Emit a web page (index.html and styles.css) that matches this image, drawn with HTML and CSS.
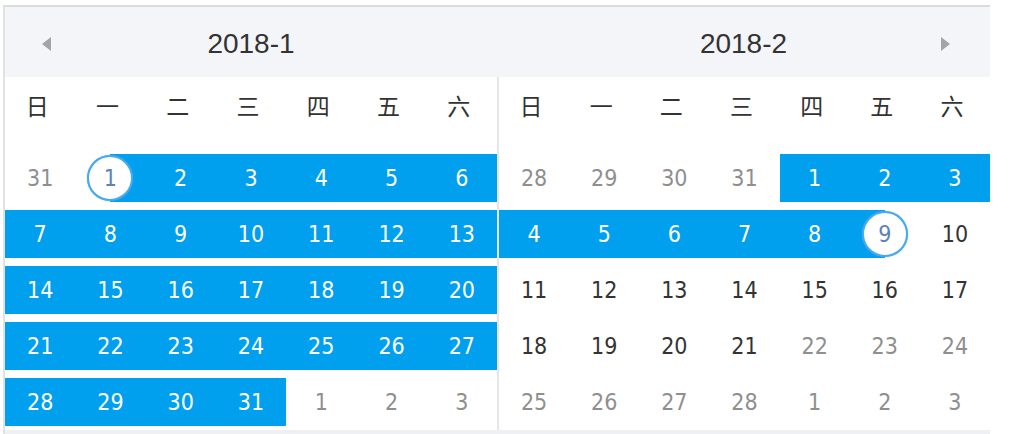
FILE: index.html
```html
<!DOCTYPE html>
<html lang="zh">
<head>
<meta charset="utf-8">
<title>日期范围</title>
<link rel="stylesheet" href="styles.css">
</head>
<body>
<div class="calendar">
  <div class="head">
    <div class="head-half">
      <svg class="arrow arrow-left" width="9" height="14" viewBox="0 0 9 14"><polygon points="9,0 9,14 0,7" fill="#a4a4a4"/></svg>
      <div class="title">2018-1</div>
      <span></span>
    </div>
    <div class="head-half">
      <span></span>
      <div class="title">2018-2</div>
      <svg class="arrow arrow-right" width="9" height="14" viewBox="0 0 9 14"><polygon points="0,0 0,14 9,7" fill="#a4a4a4"/></svg>
    </div>
  </div>
  <div class="body">
    <div class="month">
      <div class="weekdays">
        <div class="wd">日</div><div class="wd">一</div><div class="wd">二</div><div class="wd">三</div><div class="wd">四</div><div class="wd">五</div><div class="wd">六</div>
      </div>
      <div class="days">
        <div class="day"><div class="band muted">31</div></div>
        <div class="day"><div class="band start"><div class="circle">1</div></div></div>
        <div class="day"><div class="band in">2</div></div>
        <div class="day"><div class="band in">3</div></div>
        <div class="day"><div class="band in">4</div></div>
        <div class="day"><div class="band in">5</div></div>
        <div class="day"><div class="band in">6</div></div>

        <div class="day"><div class="band in">7</div></div>
        <div class="day"><div class="band in">8</div></div>
        <div class="day"><div class="band in">9</div></div>
        <div class="day"><div class="band in">10</div></div>
        <div class="day"><div class="band in">11</div></div>
        <div class="day"><div class="band in">12</div></div>
        <div class="day"><div class="band in">13</div></div>

        <div class="day"><div class="band in">14</div></div>
        <div class="day"><div class="band in">15</div></div>
        <div class="day"><div class="band in">16</div></div>
        <div class="day"><div class="band in">17</div></div>
        <div class="day"><div class="band in">18</div></div>
        <div class="day"><div class="band in">19</div></div>
        <div class="day"><div class="band in">20</div></div>

        <div class="day"><div class="band in">21</div></div>
        <div class="day"><div class="band in">22</div></div>
        <div class="day"><div class="band in">23</div></div>
        <div class="day"><div class="band in">24</div></div>
        <div class="day"><div class="band in">25</div></div>
        <div class="day"><div class="band in">26</div></div>
        <div class="day"><div class="band in">27</div></div>

        <div class="day"><div class="band in">28</div></div>
        <div class="day"><div class="band in">29</div></div>
        <div class="day"><div class="band in">30</div></div>
        <div class="day"><div class="band in">31</div></div>
        <div class="day"><div class="band muted">1</div></div>
        <div class="day"><div class="band muted">2</div></div>
        <div class="day"><div class="band muted">3</div></div>
      </div>
    </div>
    <div class="sep"></div>
    <div class="month">
      <div class="weekdays">
        <div class="wd">日</div><div class="wd">一</div><div class="wd">二</div><div class="wd">三</div><div class="wd">四</div><div class="wd">五</div><div class="wd">六</div>
      </div>
      <div class="days">
        <div class="day"><div class="band muted">28</div></div>
        <div class="day"><div class="band muted">29</div></div>
        <div class="day"><div class="band muted">30</div></div>
        <div class="day"><div class="band muted">31</div></div>
        <div class="day"><div class="band in">1</div></div>
        <div class="day"><div class="band in">2</div></div>
        <div class="day"><div class="band in">3</div></div>

        <div class="day"><div class="band in">4</div></div>
        <div class="day"><div class="band in">5</div></div>
        <div class="day"><div class="band in">6</div></div>
        <div class="day"><div class="band in">7</div></div>
        <div class="day"><div class="band in">8</div></div>
        <div class="day"><div class="band end"><div class="circle">9</div></div></div>
        <div class="day"><div class="band">10</div></div>

        <div class="day"><div class="band">11</div></div>
        <div class="day"><div class="band">12</div></div>
        <div class="day"><div class="band">13</div></div>
        <div class="day"><div class="band">14</div></div>
        <div class="day"><div class="band">15</div></div>
        <div class="day"><div class="band">16</div></div>
        <div class="day"><div class="band">17</div></div>

        <div class="day"><div class="band">18</div></div>
        <div class="day"><div class="band">19</div></div>
        <div class="day"><div class="band">20</div></div>
        <div class="day"><div class="band">21</div></div>
        <div class="day"><div class="band muted">22</div></div>
        <div class="day"><div class="band muted">23</div></div>
        <div class="day"><div class="band muted">24</div></div>

        <div class="day"><div class="band muted">25</div></div>
        <div class="day"><div class="band muted">26</div></div>
        <div class="day"><div class="band muted">27</div></div>
        <div class="day"><div class="band muted">28</div></div>
        <div class="day"><div class="band muted">1</div></div>
        <div class="day"><div class="band muted">2</div></div>
        <div class="day"><div class="band muted">3</div></div>
      </div>
    </div>
  </div>
</div>
</body>
</html>
```
FILE: styles.css
```css
html, body {
  margin: 0;
  padding: 0;
  background: #ffffff;
}

.calendar {
  margin: 5px 0 0 3px;
  width: 985px;
  border-top: 2px solid #dcdcdc;
  border-left: 2px solid #e2e2e2;
}

.head {
  display: grid;
  grid-template-columns: 492px 493px;
  height: 70px;
  background: #f4f5f9;
}

.head-half {
  display: grid;
  grid-template-columns: 1fr auto 1fr;
  align-items: center;
}

.title {
  font-family: "Liberation Sans", Arial, sans-serif;
  font-size: 28px;
  color: #333333;
  line-height: 1;
  padding-top: 3px;
}

.arrow-left {
  justify-self: start;
  margin-left: 37px;
  margin-top: 4px;
}

.arrow-right {
  justify-self: end;
  margin-right: 40px;
  margin-top: 4px;
}

.body {
  display: grid;
  grid-template-columns: 492px 2px 491px;
  border-bottom: 4px solid #eff0f4;
}

.sep {
  background: #e6e6ea;
}

.weekdays {
  display: grid;
  grid-template-columns: repeat(7, 1fr);
  height: 56px;
  margin-bottom: 17px;
  align-items: center;
}

.wd {
  text-align: center;
  padding-right: 6px;
  font-family: "Noto Sans CJK SC", sans-serif;
  font-size: 23px;
  line-height: 1;
  color: #333333;
}

.days {
  display: grid;
  grid-template-columns: repeat(7, 1fr);
  grid-auto-rows: 56px;
}

.day {
  padding: 4px 0;
}

.band {
  height: 48px;
  display: flex;
  align-items: center;
  justify-content: center;
  font-family: "DejaVu Sans Condensed", "DejaVu Sans", sans-serif;
  font-stretch: condensed;
  font-size: 23px;
  line-height: 1;
  color: #333333;
}

.band.muted {
  color: #8f8f8f;
}

.band.in {
  background: #00a0ef;
  color: #ffffff;
}

.band.start {
  background: linear-gradient(to right, transparent 50%, #00a0ef 50%);
}

.band.end {
  background: linear-gradient(to right, #00a0ef 50%, transparent 50%);
}

.circle {
  width: 46px;
  height: 46px;
  box-sizing: border-box;
  border-radius: 50%;
  border: 2px solid #48a9ef;
  box-shadow: 0 0 1px #48a9ef;
  background: #ffffff;
  color: #5b82bd;
  display: flex;
  align-items: center;
  justify-content: center;
}
```
